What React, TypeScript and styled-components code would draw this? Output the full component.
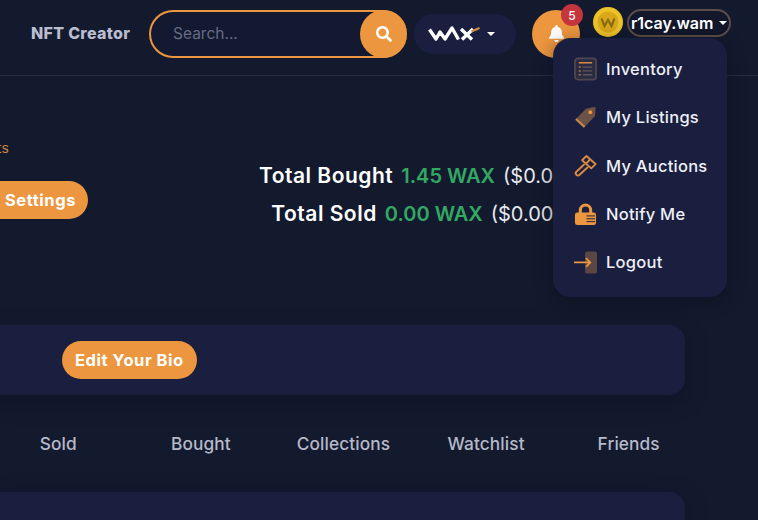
import React from 'react';
import styled, { createGlobalStyle } from 'styled-components';
import { FaBell, FaSearch } from 'react-icons/fa';

const orange = '#ec963f';

const GlobalStyle = createGlobalStyle`
    html, body {
        margin: 0;
        padding: 0;
        background: #141a2e;
    }
    * {
        box-sizing: border-box;
    }
`;

const Page = styled.div`
    position: relative;
    width: 758px;
    height: 520px;
    overflow: hidden;
    background: #141a2e;
    color: #ffffff;
    font-family: 'Inter', 'Noto Sans', sans-serif;
`;

const Header = styled.header`
    display: flex;
    height: 76px;
    padding-left: 31px;
    align-items: flex-start;
    border-bottom: 1px solid #272d47;
`;

const Brand = styled.div`
    margin-top: 24px;
    width: 118px;
    font-size: 16px;
    line-height: 19px;
    font-weight: 800;
    letter-spacing: 0.3px;
    color: #b9bdd0;
`;

const SearchBox = styled.div`
    display: flex;
    margin-top: 10px;
    width: 258px;
    height: 48px;
    align-items: center;
    justify-content: space-between;
    border: 2px solid ${orange};
    border-right: 0;
    border-radius: 24px;
    padding-left: 22px;
    background: #131930;
    color: #666b84;
    font-size: 15.5px;
    line-height: 42px;
`;

const SearchButton = styled.button`
    display: flex;
    width: 47px;
    height: 48px;
    margin: -2px 0;
    align-items: center;
    justify-content: center;
    border: 0;
    border-radius: 50%;
    padding: 0;
    background: ${orange};
    color: #ffffff;
    font-size: 16px;
`;

const NetworkPill = styled.div`
    display: flex;
    margin: 14px 0 0 7px;
    width: 102px;
    height: 40px;
    padding-left: 14px;
    align-items: center;
    gap: 7px;
    border-radius: 20px;
    background: #1a1f3f;
`;

const Caret = styled.span<{ $size?: number }>`
    width: 0;
    height: 0;
    border-left: ${(p) => p.$size ?? 4.5}px solid transparent;
    border-right: ${(p) => p.$size ?? 4.5}px solid transparent;
    border-top: ${(p) => p.$size ?? 4.5}px solid #ffffff;
`;

const BellButton = styled.div`
    position: relative;
    display: flex;
    margin: 10px 0 0 16px;
    width: 48px;
    height: 48px;
    padding-top: 15px;
    justify-content: center;
    border-radius: 50%;
    background: ${orange};
    color: #ffffff;
    font-size: 17px;
`;

const Badge = styled.span`
    position: absolute;
    top: -6px;
    right: -3px;
    display: flex;
    width: 22px;
    height: 22px;
    align-items: center;
    justify-content: center;
    border-radius: 50%;
    background: #c5353d;
    font-size: 12px;
    font-weight: 500;
`;

const Coin = styled.svg`
    margin: 7px 0 0 13px;
    flex-shrink: 0;
`;

const UserChip = styled.div`
    display: flex;
    margin: 9px 0 0 4px;
    width: 104px;
    height: 28px;
    padding-left: 2px;
    align-items: center;
    gap: 6px;
    border: 2px solid #5c4d48;
    border-radius: 14px;
    background: #12172b;
    font-size: 16px;
    font-weight: 600;
    white-space: nowrap;
`;

const Dropdown = styled.nav`
    position: absolute;
    top: 38px;
    left: 553px;
    width: 174px;
    height: 259px;
    padding: 7px 0 11px 21px;
    border-radius: 18px;
    background: #1a1f3f;
    box-shadow: 0 4px 18px rgba(6, 9, 22, 0.45);
`;

const MenuItem = styled.a`
    display: flex;
    height: 48.25px;
    align-items: center;
    gap: 9px;
    color: #eef0f8;
    font-size: 16.5px;
    font-weight: 500;
    letter-spacing: 0.25px;
    white-space: nowrap;
`;

const Hero = styled.section`
    display: flex;
    height: 249px;
`;

const HeroLeft = styled.div`
    display: flex;
    width: 88px;
    padding-top: 63px;
    flex-direction: column;
    align-items: flex-end;
    flex-shrink: 0;
`;

const HeroNote = styled.div`
    width: 88px;
    height: 18px;
    font-size: 14px;
    line-height: 18px;
    text-indent: -3px;
    color: #c9843f;
`;

const PillButton = styled.button`
    height: 38px;
    margin-top: 24px;
    border: 0;
    border-radius: 19px;
    padding: 0 13px;
    background: ${orange};
    color: #ffffff;
    font-family: inherit;
    font-size: 16.5px;
    font-weight: 700;
    letter-spacing: 0.55px;
    white-space: nowrap;
`;

const SettingsButton = styled(PillButton)`
    width: 88px;
    padding: 0 0 0 5px;
    text-align: left;
    border-radius: 0 19px 19px 0;
`;

const Stats = styled.div`
    width: 656px;
    padding-top: 81px;
    flex-shrink: 0;
    text-align: center;
    white-space: nowrap;
`;

const StatLine = styled.div`
    font-size: 21px;
    line-height: 38px;
    font-weight: 600;
    letter-spacing: 0.5px;
`;

const StatValue = styled.span`
    margin-left: 8px;
    color: #33a863;
    font-size: 20px;
    letter-spacing: 0;
`;

const StatFiat = styled.span`
    margin-left: 8px;
    color: #e6e8f0;
    font-size: 20px;
    font-weight: 400;
    letter-spacing: 0;
`;

const Main = styled.main`
    margin: 0 73px 0 -20px;
`;

const Card = styled.div`
    display: flex;
    height: 70px;
    padding-left: 82px;
    align-items: center;
    border-radius: 16px;
    background: #1a1f3f;
    box-shadow: 0 6px 22px rgba(7, 10, 24, 0.35);
`;

const BioButton = styled(PillButton)`
    margin-top: 0;
`;

const Tabs = styled.div`
    display: grid;
    height: 97px;
    margin-left: 7px;
    grid-template-columns: repeat(5, 142.6px);
    align-items: center;
`;

const Tab = styled.div`
    text-align: center;
    color: #b5b9ca;
    font-size: 17.3px;
    font-weight: 500;
    letter-spacing: 0.1px;
`;

const InventoryIcon = () => (
    <svg width="23" height="24" viewBox="0 0 24 24">
        <rect x="1" y="1" width="22" height="22" rx="3" fill="#2a2a42" stroke="#4f4850" strokeWidth="1.8" />
        <path d="M5 5.5h14" stroke="#d48a42" strokeWidth="1.6" />
        <path d="M9 10h10M9 14h10M9 18h10" stroke="#5f565c" strokeWidth="1.4" />
        <path d="M5 10h2M5 14h2M5 18h2" stroke="#b87638" strokeWidth="1.6" />
    </svg>
);

const TagIcon = () => (
    <svg width="23" height="24" viewBox="0 0 24 24">
        <path d="M12.5 3.5 21 1.5q1.5 0 1.5 1.5l-.5 8L11 22.5 2 14z" fill="#6d5247" />
        <path d="M2 14l9 8.5" stroke="#c98b4a" strokeWidth="2.2" />
        <circle cx="17" cy="7" r="2" fill="#ec963f" />
    </svg>
);

const GavelIcon = () => (
    <svg width="23" height="24" viewBox="0 0 24 24" fill="none" stroke="#d98a42" strokeWidth="2" strokeLinejoin="round" strokeLinecap="round">
        <path d="M8.5 6 13 1.5l9.5 8.5-4.5 4.5z" />
        <path d="M12.5 9.5 16.5 5.5" />
        <path d="M10.5 10.5 2.5 18a2.2 2.2 0 0 0 3.3 3.2l8.2-7.7" />
    </svg>
);

const LockIcon = () => (
    <svg width="23" height="24" viewBox="0 0 24 24">
        <path d="M5 11V8a7 7 0 0 1 14 0v3h-3.2V8a3.8 3.8 0 0 0-7.6 0v3z" fill="#ec963f" />
        <rect x="1" y="10.5" width="22" height="13" rx="2.5" fill="#ec963f" />
        <path d="M13 14h9M13 17h9M13 20h9" stroke="#1a1f3f" strokeWidth="1" />
    </svg>
);

const LogoutIcon = () => (
    <svg width="23" height="24" viewBox="0 0 24 24">
        <rect x="11.5" y="1" width="12.5" height="23" rx="2" fill="#5a4642" />
        <path d="M0 12.5h17M12.5 8l4.5 4.5-4.5 4.5" fill="none" stroke="#ec963f" strokeWidth="1.8" />
    </svg>
);

const WaxLogo = () => (
    <svg width="52" height="16" viewBox="0 0 52 16" fill="none">
        <path d="M1.5 3.5 8 13 12 6l5 7L24 2l6.5 11.5" stroke="#ffffff" strokeWidth="3.4" strokeLinejoin="round" />
        <path d="M33 3l11 10.5M45 3 34 13.5" stroke="#ffffff" strokeWidth="3.4" />
        <path d="M43.5 5.5 51.5 2" stroke="#d98a42" strokeWidth="2.2" />
    </svg>
);

const menu = [
    { label: 'Inventory', icon: <InventoryIcon /> },
    { label: 'My Listings', icon: <TagIcon /> },
    { label: 'My Auctions', icon: <GavelIcon /> },
    { label: 'Notify Me', icon: <LockIcon /> },
    { label: 'Logout', icon: <LogoutIcon /> },
];

const tabs = ['Sold', 'Bought', 'Collections', 'Watchlist', 'Friends'];

export default function App() {
    return (
        <Page>
            <GlobalStyle />
            <Header>
                <Brand>NFT Creator</Brand>
                <SearchBox>
                    Search...
                    <SearchButton>
                        <FaSearch />
                    </SearchButton>
                </SearchBox>
                <NetworkPill>
                    <WaxLogo />
                    <Caret />
                </NetworkPill>
                <BellButton>
                    <FaBell />
                    <Badge>5</Badge>
                </BellButton>
                <Coin width="30" height="30" viewBox="0 0 30 30">
                    <circle cx="15" cy="15" r="15" fill="#ecc327" />
                    <circle cx="15" cy="15" r="10.5" fill="#d8a81a" />
                    <path d="M8.5 11.5 11.5 19l3.5-6 3.5 6 3-7.5" fill="none" stroke="#8a6a12" strokeWidth="2.2" />
                </Coin>
                <UserChip>
                    r1cay.wam
                    <Caret $size={4} />
                </UserChip>
                <Dropdown>
                    {menu.map((item) => (
                        <MenuItem key={item.label}>
                            {item.icon}
                            {item.label}
                        </MenuItem>
                    ))}
                </Dropdown>
            </Header>
            <Hero>
                <HeroLeft>
                    <HeroNote>ts</HeroNote>
                    <SettingsButton>Settings</SettingsButton>
                </HeroLeft>
                <Stats>
                    <StatLine>
                        Total Bought<StatValue>1.45 WAX</StatValue>
                        <StatFiat>($0.00)</StatFiat>
                    </StatLine>
                    <StatLine>
                        Total Sold<StatValue>0.00 WAX</StatValue>
                        <StatFiat>($0.00)</StatFiat>
                    </StatLine>
                </Stats>
            </Hero>
            <Main>
                <Card>
                    <BioButton>Edit Your Bio</BioButton>
                </Card>
                <Tabs>
                    {tabs.map((tab) => (
                        <Tab key={tab}>{tab}</Tab>
                    ))}
                </Tabs>
                <Card />
            </Main>
        </Page>
    );
}
